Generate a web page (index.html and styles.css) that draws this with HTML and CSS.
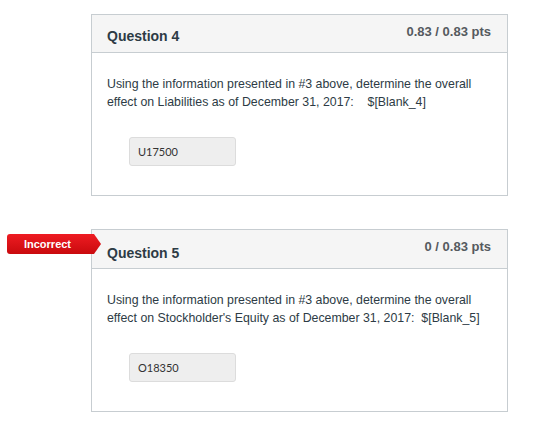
FILE: index.html
```html
<!DOCTYPE html>
<html lang="en">
<head>
<meta charset="utf-8">
<title>Quiz results</title>
<link rel="stylesheet" href="styles.css">
</head>
<body>
<main class="quiz">
  <section class="question">
    <header class="question-header">
      <h2 class="question-title">Question 4</h2>
      <span class="question-points">0.83 / 0.83 pts</span>
    </header>
    <div class="question-body">
      <p class="question-text">Using the information presented in #3 above, determine the overall effect on Liabilities as of December 31, 2017: &nbsp;&nbsp;&nbsp;$[Blank_4]</p>
      <div class="answer-box">U17500</div>
    </div>
  </section>

  <section class="question question-incorrect">
    <span class="result-flag">Incorrect</span>
    <header class="question-header">
      <h2 class="question-title">Question 5</h2>
      <span class="question-points">0 / 0.83 pts</span>
    </header>
    <div class="question-body">
      <p class="question-text">Using the information presented in #3 above, determine the overall effect on Stockholder's Equity as of December 31, 2017: &nbsp;$[Blank_5]</p>
      <div class="answer-box">O18350</div>
    </div>
  </section>
</main>
</body>
</html>
```

FILE: styles.css
```css
html, body {
  margin: 0;
  padding: 0;
  background: #ffffff;
}

body {
  font-family: "Liberation Sans", Arial, Helvetica, sans-serif;
  color: #2d3b45;
}

.quiz {
  display: flex;
  flex-direction: column;
  gap: 33px;
  padding: 14px 0 0 91px;
  width: 417px;
}

.question {
  position: relative;
  border: 1px solid #c7cdd1;
  background: #ffffff;
}

.question-header {
  display: flex;
  justify-content: space-between;
  align-items: flex-start;
  height: 37px;
  background: #f5f5f5;
  border-bottom: 1px solid #c7cdd1;
  padding: 0 16px 0 15px;
}

.question-title {
  margin: 13px 0 0;
  font-size: 14px;
  font-weight: bold;
  line-height: 16px;
  color: #2d3b45;
}

.question-points {
  margin-top: 9px;
  font-size: 13px;
  font-weight: bold;
  line-height: 16px;
  color: #555a5f;
}

.question-incorrect .question-header {
  height: 38px;
}

.question-incorrect .question-title {
  margin-top: 15px;
}

.question-body {
  padding: 22px 16px 29px 15px;
}

.question-text {
  margin: 0;
  font-size: 12.35px;
  line-height: 18px;
  color: #2d3b45;
}

.answer-box {
  box-sizing: border-box;
  width: 107px;
  height: 29px;
  margin: 26px 0 0 22px;
  padding: 0 8px;
  display: flex;
  align-items: center;
  background: #eeeeee;
  border: 1px solid #dcdcdc;
  border-radius: 3px;
  font-family: Lato, "Liberation Sans", sans-serif;
  font-size: 11px;
  color: #333333;
}

.result-flag {
  position: absolute;
  left: -85px;
  top: 4px;
  box-sizing: border-box;
  width: 94px;
  height: 20px;
  padding: 0 13px 0 0;
  display: flex;
  align-items: center;
  justify-content: center;
  font-size: 11px;
  font-weight: bold;
  color: #ffffff;
  background: linear-gradient(#ee1c22, #c90a0e);
  border-radius: 3px 0 0 3px;
  clip-path: polygon(0 0, 87px 0, 94px 50%, 87px 100%, 0 100%);
}
```
